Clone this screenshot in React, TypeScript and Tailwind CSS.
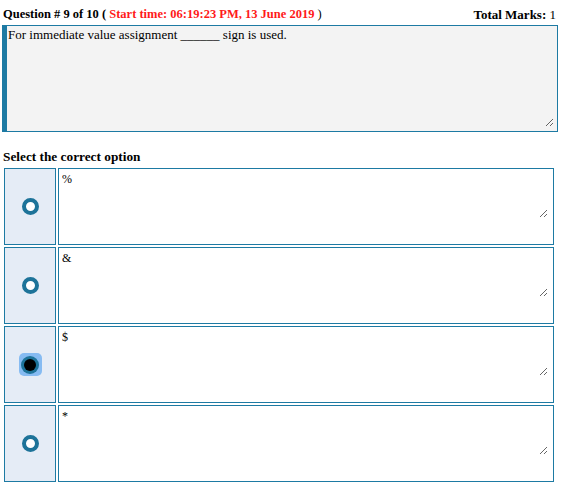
import React from "react";

const options = ["%", "&", "$", "*"];
const selected = 2;
const serif = '"Liberation Serif", "Times New Roman", serif';

function Radio({ checked }: { checked: boolean }) {
  if (checked) {
    return (
      <div className="w-[23px] h-[23px] rounded-[5px] bg-[#86bbf2] flex items-center justify-center">
        <div className="w-[18px] h-[18px] rounded-full bg-[#1d7399] flex items-center justify-center">
          <div className="w-[12px] h-[12px] rounded-full bg-black" />
        </div>
      </div>
    );
  }
  return <div className="w-[17px] h-[17px] rounded-full border-[4px] border-[#1d7399] bg-white" />;
}

export default function App() {
  return (
    <div className="w-[564px] h-[486px] bg-white text-black overflow-hidden" style={{ fontFamily: serif }}>
      <div className="flex justify-between items-end px-[3px] pt-[5px] h-[22px] text-[12.5px] leading-[15px]">
        <div>
          <span className="font-bold">Question # 9 of 10 ( </span>
          <span className="font-bold text-[#ff1a1a]">Start time: 06:19:23 PM, 13 June 2019</span>
          <span> )</span>
        </div>
        <div className="pr-[5px] text-[13px]">
          <span className="font-bold">Total Marks: </span>
          <span>1</span>
        </div>
      </div>
      <div className="ml-[2px] mt-[3px] w-[556px] h-[107px] bg-[#f3f3f3] border border-[#1d7aa3] border-l-[5px] pl-[1px] pt-[1px]">
        <textarea
          readOnly
          defaultValue="For immediate value assignment ______ sign is used."
          className="block w-[546px] h-[100px] bg-transparent border-0 p-0 text-[13px] leading-[15px] outline-none"
          style={{ fontFamily: serif, resize: "both" }}
        />
      </div>
      <div className="font-bold text-[13.3px] leading-[16px] px-[3px] mt-[17px]">Select the correct option</div>
      <div className="flex flex-col gap-[2px] mt-[3px] ml-[4px]">
        {options.map((o, i) => (
          <div key={i} className="flex gap-[2px] h-[77px]">
            <div className="w-[52px] h-full bg-[#e5ecf6] border border-[#1d7aa3] flex items-center justify-center">
              <Radio checked={i === selected} />
            </div>
            <div className="w-[496px] h-full bg-white border border-[#1d7aa3] pl-[3px] pt-[3px]">
              <textarea
                readOnly
                defaultValue={o}
                className="block w-[486px] h-[46px] bg-transparent border-0 p-0 text-[12px] leading-[14px] outline-none"
                style={{ fontFamily: serif, resize: "both" }}
              />
            </div>
          </div>
        ))}
      </div>
    </div>
  );
}
